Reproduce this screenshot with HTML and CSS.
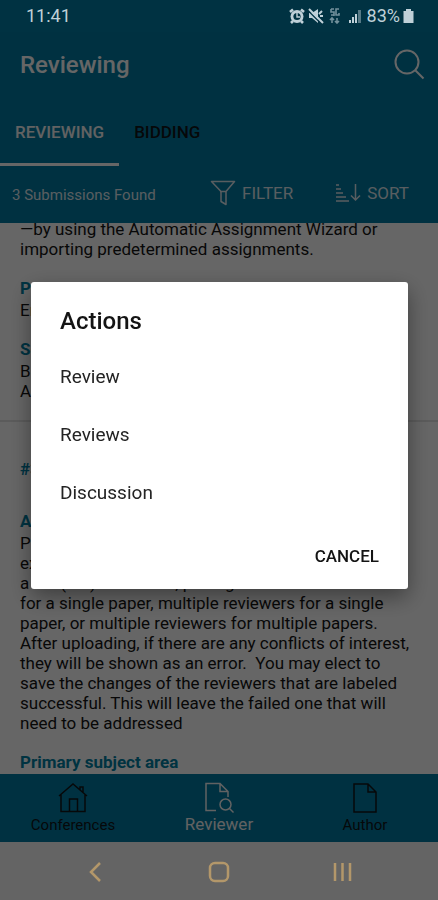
FILE: index.html
```html
<!DOCTYPE html>
<html lang="en">
<head>
<meta charset="utf-8">
<meta name="viewport" content="width=device-width, initial-scale=1">
<title>Reviewing</title>
<link rel="stylesheet" href="styles.css">
</head>
<body>
<div class="status">
  <span>11:41</span>
  <div class="status-icons">
    <svg width="16" height="16" viewBox="0 0 16 16" aria-hidden="true"><circle cx="8" cy="8.500" r="6.500" fill="currentColor"/><path d="M1 4 4 1.500M15 4 12 1.500M4 13l-2 2M12 13l2 2" stroke="currentColor" stroke-width="2.600"/><circle cx="8" cy="8.500" r="3.600" fill="#003242"/><path d="M8 5v4h3" fill="none" stroke="currentColor" stroke-width="1.400"/></svg>
    <svg width="16" height="16" viewBox="0 0 16 16" aria-hidden="true"><path d="M1 5h3l6-4v14l-6-5H1z" fill="currentColor"/><path d="M1 3.500 13 15.500" stroke="#003242" stroke-width="1.400"/><path d="m1 1 14 14M11 6l3-3M12 8h3" stroke="currentColor" stroke-width="2"/></svg>
    <svg class="faint" width="12" height="16" viewBox="0 0 12 16" aria-hidden="true"><path d="M2 1v3h3v4M5 1H2M10 1H7v6h3V5M2 7h3M3 10v5M1 12l2-2 2 2M8 10v5M6 13l2 2 2-2" fill="none" stroke="currentColor" stroke-width="1.600"/></svg>
    <svg class="signal" width="14" height="16" viewBox="0 0 14 16" aria-hidden="true"><path d="M1 12h2v3H1zM4 9h2v6H4zM7 6h2v9H7z" fill="currentColor"/><path d="M10 2h3v13h-3z" fill="currentColor" opacity=".45"/></svg>
    <span>83%</span>
    <svg width="11" height="16" viewBox="0 0 11 16" aria-hidden="true"><path d="M3 1h5v2h2.500v12H.500V3H3z" fill="currentColor"/></svg>
  </div>
</div>

<header class="header">
  <div class="title-row">
    <h1>Reviewing</h1>
    <button class="icon-button" aria-label="Search"><svg width="32" height="32" viewBox="0 0 32 32" fill="none" stroke="currentColor" stroke-width="2" aria-hidden="true"><circle cx="14" cy="13" r="11.500"/><path d="m22 21 8.500 8.500"/></svg></button>
  </div>
  <nav class="tabs" aria-label="Lists">
    <a class="tab active" href="#reviewing">REVIEWING</a>
    <a class="tab" href="#bidding">BIDDING</a>
  </nav>
  <div class="tools">
    <span class="count">3 Submissions Found</span>
    <button class="tool"><svg width="26" height="26" viewBox="0 0 26 26" fill="none" stroke="currentColor" stroke-width="1.500" stroke-linejoin="round" aria-hidden="true"><path d="M1.500 1.500h23l-8.500 10v13l-5-3v-10zM10 11.500h6"/></svg>FILTER</button>
    <button class="tool"><svg width="26" height="22" viewBox="0 0 26 22" fill="none" stroke="currentColor" stroke-width="1.500" aria-hidden="true"><path d="M1 3h3M1 7h5M1 11h7M1 15h10M1 19h13M20.500 2v16M16 13.500l4.500 4.500 4.500-4.500"/></svg>SORT</button>
  </div>
</header>

<main class="content">
  <article class="entry">
    <p>—by using the Automatic Assignment Wizard or importing predetermined assignments.</p>
    <h2>Primary subject area</h2>
    <p>Entertainment</p>
    <h2>Secondary subject areas</h2>
    <p>Business<br>Art</p>
  </article>
  <article class="entry next">
    <h2>#3</h2>
    <h2 class="abstract">Abstract</h2>
    <p>Program chairs can upload reviewers from an<br>external file. The chair can upload an assignment in<br>a file (.txt) to the site, pairing a reviewer<br>for a single paper, multiple reviewers for a single<br>paper, or multiple reviewers for multiple papers.<br>After uploading, if there are any conflicts of interest,<br>they will be shown as an error.&nbsp; You may elect to<br>save the changes of the reviewers that are labeled<br>successful. This will leave the failed one that will<br>need to be addressed</p>
    <h2>Primary subject area</h2>
  </article>
</main>

<nav class="bottom" aria-label="Main">
  <a href="#conferences"><svg width="30" height="30" viewBox="0 0 30 30" fill="none" stroke="currentColor" stroke-width="1.500" aria-hidden="true"><path d="M1 13 15 1l14 12M3 11v17.500h24V11M22 7V4h3v5M11.500 28V16h8v12"/></svg>Conferences</a>
  <a class="current" href="#reviewer"><svg width="30" height="32" viewBox="0 0 30 32" fill="none" stroke="currentColor" stroke-width="1.500" aria-hidden="true"><path d="M12 28.500H2v-27h14l8 8V15M16 1.500v8h8"/><circle cx="21.500" cy="22.500" r="5.500"/><path d="m25.500 26.500 4 4"/></svg>Reviewer</a>
  <a href="#author"><svg width="30" height="30" viewBox="0 0 30 30" fill="none" stroke="currentColor" stroke-width="1.500" aria-hidden="true"><path d="M4 1h14l8 8v20H4zM18 1v8h8"/></svg>Author</a>
</nav>

<div class="scrim">
  <section class="dialog" role="dialog" aria-modal="true" aria-labelledby="dialog-title">
    <h2 id="dialog-title">Actions</h2>
    <button class="action">Review</button>
    <button class="action">Reviews</button>
    <button class="action">Discussion</button>
    <button class="cancel">CANCEL</button>
  </section>
</div>

<nav class="system" aria-label="System">
  <button aria-label="Back"><svg width="22" height="22" viewBox="0 0 22 22" fill="none" stroke="currentColor" stroke-width="2.500" aria-hidden="true"><path d="M15 2 6 11l9 9"/></svg></button>
  <button aria-label="Home"><svg width="22" height="22" viewBox="0 0 22 22" fill="none" stroke="currentColor" stroke-width="2.500" aria-hidden="true"><rect x="2" y="2" width="18" height="18" rx="5"/></svg></button>
  <button aria-label="Recent apps"><svg width="22" height="22" viewBox="0 0 22 22" fill="none" stroke="currentColor" stroke-width="2.500" aria-hidden="true"><path d="M4 2v18M11.500 2v18M19 2v18"/></svg></button>
</nav>
</body>
</html>
```
FILE: styles.css
```css
* { box-sizing: border-box; }

body {
  margin: 0;
  height: 100vh;
  display: flex;
  flex-direction: column;
  background: #fff;
  color: #141414;
  font: 17px/20px Roboto, sans-serif;
}

h1, h2, p { margin: 0; }
a { color: inherit; text-decoration: none; }
button {
  padding: 0;
  border: 0;
  background: none;
  color: inherit;
  font: inherit;
  display: flex;
  align-items: center;
}
svg { flex: none; display: block; }

.status {
  position: relative;
  z-index: 2;
  display: flex;
  justify-content: space-between;
  padding: 6px 24px 6px 26px;
  background: #003242;
  color: #bfd0d8;
  font-size: 18px;
}
.status-icons { display: flex; align-items: center; gap: 3px; }
.faint { opacity: .6; margin-left: 2px; }
.signal { margin: 0 2px 0 4px; }

.header { background: #007ca4; color: #fff; }
.title-row {
  display: flex;
  justify-content: space-between;
  align-items: center;
  height: 66px;
  padding: 0 13px 0 20px;
}
h1 { font-size: 24px; line-height: 28px; font-weight: 500; }

.tabs { display: flex; height: 68px; }
.tab {
  display: flex;
  align-items: center;
  padding: 2px 15px 0;
  font-weight: 500;
  color: #101418;
  border-bottom: 3px solid transparent;
}
.tab.active { color: #f4f4f4; border-color: #fff; }

.tools {
  display: flex;
  align-items: center;
  height: 57px;
  padding: 0 29px 4px 12px;
  color: #dfe9f0;
}
.count { flex: 1; font-size: 15px; padding-top: 4px; }
.tool { gap: 6px; }
.tool + .tool { margin-left: 42px; }

.content { flex: 1; min-height: 0; overflow: hidden; }
.entry { padding: 0 20px; }
.entry:first-child { margin-top: -4px; padding-bottom: 19px; }
.entry h2 {
  padding: 19px 0 2px;
  font-size: 17px;
  line-height: 20px;
  font-weight: 700;
  color: #0080a4;
}
.entry.next { border-top: 2px solid #e4e4e4; padding-top: 18px; white-space: nowrap; }
.entry .abstract { padding-top: 30px; }

.bottom {
  display: flex;
  justify-content: space-between;
  height: 68px;
  background: #007ca4;
  color: #101418;
  font-size: 15px;
}
.bottom a {
  flex: 1;
  display: flex;
  flex-direction: column;
  align-items: center;
  justify-content: center;
  gap: 2px;
}
.bottom a:not(.current) { padding-top: 2px; }
.bottom .current { color: #f4f4f4; font-size: 17px; gap: 0; }

.scrim {
  position: fixed;
  inset: 0;
  z-index: 1;
  display: flex;
  align-items: center;
  padding: 0 30px 29px 31px;
  background: rgba(0, 0, 0, .6);
}
.dialog {
  flex: 1;
  display: flex;
  flex-direction: column;
  padding: 24px 29px 20px;
  border-radius: 3px;
  background: #fff;
  color: #242424;
  box-shadow: 0 8px 22px rgba(0, 0, 0, .4);
}
.dialog h2 {
  margin-bottom: 12px;
  font-size: 24px;
  line-height: 30px;
  font-weight: 500;
  color: #141414;
}
.action { height: 58px; font-size: 19px; }
.cancel {
  align-self: flex-end;
  height: 27px;
  margin-top: 20px;
  font-weight: 500;
  color: #141414;
}

.system {
  position: relative;
  z-index: 2;
  display: flex;
  justify-content: center;
  gap: 101px;
  height: 58px;
  padding-top: 2px;
  background: #646464;
  color: #b3976a;
}
```
